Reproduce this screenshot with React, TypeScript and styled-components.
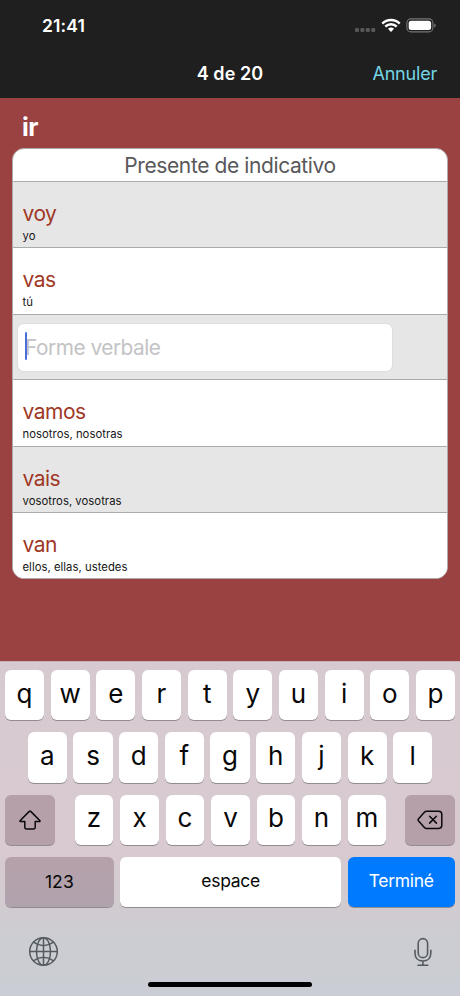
import React from "react";
import styled, { createGlobalStyle } from "styled-components";

const GlobalStyle = createGlobalStyle`
  *, *::before, *::after { box-sizing: border-box; }
  body { margin: 0; background: #994241; }
  body, input { font-family: Inter, "Liberation Sans", sans-serif; }
`;

const Screen = styled.div`
  width: 460px;
  height: 996px;
  display: flex;
  flex-direction: column;
  overflow: hidden;
  background: #994241;
`;

const Header = styled.header`
  flex: none;
  height: 98px;
  background: #1f1f1f;
  color: #fff;
`;

const StatusBar = styled.div`
  height: 50px;
  padding: 1px 24px 0 42px;
  display: flex;
  align-items: center;
  justify-content: space-between;
`;

const Clock = styled.span`
  font-size: 17.5px;
  font-weight: 600;
  letter-spacing: 0.15px;
`;

const StatusIcons = styled.div`
  display: flex;
  align-items: center;
  svg { display: block; }
`;

const NavBar = styled.nav`
  height: 48px;
  display: grid;
  grid-template-columns: 1fr auto 1fr;
  align-items: center;
  padding: 0 23px 1px;
`;

const NavTitle = styled.h1`
  grid-column: 2;
  margin: 0;
  font-size: 18px;
  font-weight: 600;
  letter-spacing: 0.1px;
`;

const CancelButton = styled.button`
  justify-self: end;
  padding: 0;
  border: 0;
  background: none;
  color: #74d5e4;
  font: 400 18px Inter, sans-serif;
  letter-spacing: -0.2px;
`;

const Content = styled.main`
  flex: none;
  height: 563px;
  padding: 0 12px;
`;

const Verb = styled.h2`
  margin: 0;
  height: 50px;
  padding: 13px 0 0 10px;
  color: #fff;
  font-size: 25px;
  line-height: 32px;
  font-weight: 700;
  letter-spacing: -0.5px;
`;

const Card = styled.section`
  height: 431px;
  display: grid;
  grid-template-rows: 32px 66px 67px 65px 67px 66px 1fr;
  border: 1px solid #b2aaaa;
  border-radius: 12px;
  background: #fff;
  overflow: hidden;
`;

const Tense = styled.h3`
  margin: 0;
  text-align: center;
  font-size: 21px;
  line-height: 33px;
  font-weight: 400;
  letter-spacing: -0.4px;
  color: #58585a;
`;

const Row = styled.div<{ $shaded?: boolean }>`
  border-top: 1px solid #a9abad;
  background: ${(p) => (p.$shaded ? "#e6e6e6" : "#fff")};
  padding: 18px 10px 0 9.5px;
`;

const FieldRow = styled(Row)`
  padding: 8px 54px 0 4px;
`;

const Form = styled.div`
  font-size: 21px;
  line-height: 27px;
  letter-spacing: -0.5px;
  color: #a03826;
`;

const Pronoun = styled.div`
  margin-top: 2px;
  font-size: 11.3px;
  line-height: 15px;
  letter-spacing: 0.03px;
  color: #151515;
`;

const Field = styled.div`
  height: 49px;
  display: flex;
  align-items: center;
  padding-left: 7px;
  border: 1px solid #dedede;
  border-radius: 7px;
  background: #fff;
`;

const Caret = styled.span`
  flex: none;
  width: 2px;
  height: 28px;
  margin: 0 -2px 3px 0;
  border-radius: 1px;
  background: #4a6fdc;
  z-index: 1;
`;

const Placeholder = styled.span`
  font-size: 20.8px;
  letter-spacing: -0.47px;
  color: #c3c3c5;
`;

const Keyboard = styled.section`
  flex: 1;
  padding: 8px 5px 0;
  border-top: 1px solid #c9b1b5;
  background: linear-gradient(180deg, #d6cad0 0%, #d8cad0 55%, #d1cbd0 73%, #cccdd2 83%, #cacdd4 100%);
`;

const KeyRow = styled.div<{ $inset?: number }>`
  display: flex;
  gap: 6.6px;
  height: 50.3px;
  margin-bottom: 12px;
  padding: 0 ${(p) => p.$inset ?? 0}px;
`;

const Key = styled.button`
  flex: 1 1 0;
  min-width: 0;
  padding: 0 0 4px;
  border: 0;
  border-radius: 6px;
  background: #fff;
  box-shadow: 0 1px 0 #928b90;
  color: #080808;
  font: 400 26px Inter, sans-serif;
  display: flex;
  align-items: center;
  justify-content: center;
`;

const LetterGroup = styled.div`
  flex: 1;
  display: flex;
  gap: 6.6px;
  margin: 0 12px 0 13px;
`;

const IconKey = styled(Key)`
  flex: 0 0 50px;
  padding: 0;
  background: #b5a0a9;
`;

const WideKey = styled(Key)<{ $width?: number; $tone?: "grey" | "blue" }>`
  flex: ${(p) => (p.$width ? `0 0 ${p.$width}px` : "1 1 0")};
  padding: 0 0 ${(p) => (p.$tone === "grey" ? 1 : 3)}px;
  background: ${(p) =>
    p.$tone === "grey" ? "linear-gradient(#b6a1aa, #b0a3ae)" : p.$tone === "blue" ? "#007aff" : "#fff"};
  color: ${(p) => (p.$tone === "blue" ? "#fff" : "#080808")};
  font-size: 17.5px;
  letter-spacing: ${(p) => (p.$tone === "grey" ? 0.1 : -0.3)}px;
`;

const BottomBar = styled.div`
  display: flex;
  justify-content: space-between;
  align-items: flex-start;
  height: 63px;
  padding: 17px 21px 0 23px;
  svg { display: block; }
`;

const HomeIndicator = styled.div`
  width: 164px;
  height: 5px;
  margin: 0 auto;
  border-radius: 3px;
  background: #000;
`;

const SignalDots = () => (
  <svg width="22" height="20" viewBox="0 0 22 20" fill="#57575a">
    {[1, 6.4, 11.8, 17.2].map((x) => (
      <rect key={x} x={x} y="12" width="4" height="4" rx="1.2" />
    ))}
  </svg>
);

const Wifi = () => (
  <svg width="30" height="20" viewBox="0 0 30 20" fill="none" stroke="#fff" strokeWidth="2.5">
    <path d="M6.3 7.6 A12.3 12.3 0 0 1 23.7 7.6" />
    <path d="M9.3 10.7 A8 8 0 0 1 20.7 10.7" />
    <path d="M12 12.8 A4.2 4.2 0 0 1 18 12.8 L15 16Z" fill="#fff" stroke="none" />
  </svg>
);

const Battery = () => (
  <svg width="30" height="20" viewBox="0 0 30 20">
    <rect x="0.9" y="2.9" width="26" height="13" rx="4" fill="none" stroke="#77777a" strokeWidth="1.1" />
    <rect x="2.7" y="4.7" width="22.4" height="9.4" rx="2.5" fill="#fff" />
    <path d="M28.2 7.4 Q29.7 8 29.7 9.4 Q29.7 10.8 28.2 11.4Z" fill="#77777a" />
  </svg>
);

const Shift = () => (
  <svg width="24" height="22" viewBox="0 0 24 22" fill="none" stroke="#0b080a" strokeWidth="1.5" strokeLinejoin="round">
    <path d="M11.3 2.4 Q12 1.6 12.7 2.4 L22 11.8 Q22.4 12.4 21.7 12.4 H17.2 V18.6 Q17.2 20 15.8 20 H8.2 Q6.8 20 6.8 18.6 V12.4 H2.3 Q1.6 12.4 2 11.8Z" />
  </svg>
);

const Backspace = () => (
  <svg width="26" height="20" viewBox="0 0 26 20" fill="none" stroke="#0b080a" strokeWidth="1.5" strokeLinecap="round" strokeLinejoin="round">
    <path d="M9.6 1.2 H21.7 Q24.8 1.2 24.8 4.3 V15.3 Q24.8 18.4 21.7 18.4 H9.6 Q8.3 18.4 7.4 17.4 L1.4 10.7 Q.7 9.8 1.4 8.9 L7.4 2.2 Q8.3 1.2 9.6 1.2Z" />
    <path d="M12.6 6.3 L19.4 13.1 M19.4 6.3 L12.6 13.1" />
  </svg>
);

const Globe = () => (
  <svg width="31" height="31" viewBox="0 0 31 31" fill="none" stroke="#555b61" strokeWidth="1.5">
    <circle cx="15.5" cy="15.5" r="13.8" />
    <ellipse cx="15.5" cy="15.5" rx="7" ry="13.8" />
    <path d="M15.5 1.7 V29.3 M1.7 15.5 H29.3 M5.4 6.2 Q15.5 13.2 25.6 6.2 M5.4 24.8 Q15.5 17.8 25.6 24.8" />
  </svg>
);

const Microphone = () => (
  <svg width="22" height="32" viewBox="0 0 22 32" fill="none" stroke="#555b61" strokeWidth="1.6" strokeLinecap="round">
    <rect x="6.2" y="2.6" width="9.4" height="19" rx="4.7" />
    <path d="M3 14.2 V17.2 C3 22 6.2 25 10.9 25 S18.8 22 18.8 17.2 V14.2 M10.9 25 V29.2 M6 29.2 H15.8" />
  </svg>
);

type Conjugation = { form?: string; pronoun?: string };

const conjugations: Conjugation[] = [
  { form: "voy", pronoun: "yo" },
  { form: "vas", pronoun: "tú" },
  {},
  { form: "vamos", pronoun: "nosotros, nosotras" },
  { form: "vais", pronoun: "vosotros, vosotras" },
  { form: "van", pronoun: "ellos, ellas, ustedes" },
];

const letters = (keys: string) => keys.split("").map((k) => <Key key={k}>{k}</Key>);

export default function App() {
  return (
    <Screen>
      <GlobalStyle />
      <Header>
        <StatusBar>
          <Clock>21:41</Clock>
          <StatusIcons>
            <SignalDots />
            <Wifi />
            <Battery />
          </StatusIcons>
        </StatusBar>
        <NavBar>
          <NavTitle>4 de 20</NavTitle>
          <CancelButton>Annuler</CancelButton>
        </NavBar>
      </Header>
      <Content>
        <Verb>ir</Verb>
        <Card>
          <Tense>Presente de indicativo</Tense>
          {conjugations.map(({ form, pronoun }, i) =>
            form ? (
              <Row key={i} $shaded={i % 2 === 0}>
                <Form>{form}</Form>
                <Pronoun>{pronoun}</Pronoun>
              </Row>
            ) : (
              <FieldRow key={i} $shaded>
                <Field>
                  <Caret />
                  <Placeholder>Forme verbale</Placeholder>
                </Field>
              </FieldRow>
            )
          )}
        </Card>
      </Content>
      <Keyboard>
        <KeyRow>{letters("qwertyuiop")}</KeyRow>
        <KeyRow $inset={22.8}>{letters("asdfghjkl")}</KeyRow>
        <KeyRow>
          <IconKey aria-label="Majuscule"><Shift /></IconKey>
          <LetterGroup>{letters("zxcvbnm")}</LetterGroup>
          <IconKey aria-label="Effacer"><Backspace /></IconKey>
        </KeyRow>
        <KeyRow>
          <WideKey $width={108.7} $tone="grey">123</WideKey>
          <WideKey>espace</WideKey>
          <WideKey $width={107.5} $tone="blue">Terminé</WideKey>
        </KeyRow>
        <BottomBar>
          <Globe />
          <Microphone />
        </BottomBar>
        <HomeIndicator />
      </Keyboard>
    </Screen>
  );
}
